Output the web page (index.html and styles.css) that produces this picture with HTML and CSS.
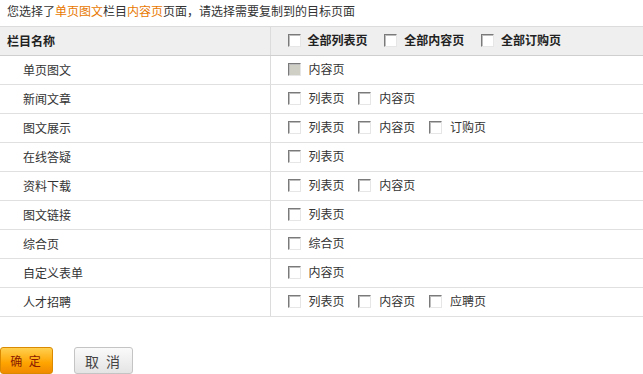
FILE: index.html
```html
<!DOCTYPE html>
<html>
<head>
    <title>复制页面</title>
    <link rel="stylesheet" href="styles.css">
</head>
<body>
    <p class="tip">您选择了<span class="hl">单页图文</span>栏目<span class="hl">内容页</span>页面，请选择需要复制到的目标页面</p>
    <table class="lista">
        <tr class="cabecera">
            <th class="col-nombre">栏目名称</th>
            <th>
                <label class="op"><input type="checkbox">全部列表页</label>
                <label class="op"><input type="checkbox">全部内容页</label>
                <label class="op"><input type="checkbox">全部订购页</label>
            </th>
        </tr>
        <tr>
            <td class="col-nombre">单页图文</td>
            <td><label class="op"><input type="checkbox" disabled>内容页</label></td>
        </tr>
        <tr>
            <td class="col-nombre">新闻文章</td>
            <td>
                <label class="op"><input type="checkbox">列表页</label>
                <label class="op"><input type="checkbox">内容页</label>
            </td>
        </tr>
        <tr>
            <td class="col-nombre">图文展示</td>
            <td>
                <label class="op"><input type="checkbox">列表页</label>
                <label class="op"><input type="checkbox">内容页</label>
                <label class="op"><input type="checkbox">订购页</label>
            </td>
        </tr>
        <tr>
            <td class="col-nombre">在线答疑</td>
            <td><label class="op"><input type="checkbox">列表页</label></td>
        </tr>
        <tr>
            <td class="col-nombre">资料下载</td>
            <td>
                <label class="op"><input type="checkbox">列表页</label>
                <label class="op"><input type="checkbox">内容页</label>
            </td>
        </tr>
        <tr>
            <td class="col-nombre">图文链接</td>
            <td><label class="op"><input type="checkbox">列表页</label></td>
        </tr>
        <tr>
            <td class="col-nombre">综合页</td>
            <td><label class="op"><input type="checkbox">综合页</label></td>
        </tr>
        <tr>
            <td class="col-nombre">自定义表单</td>
            <td><label class="op"><input type="checkbox">内容页</label></td>
        </tr>
        <tr>
            <td class="col-nombre">人才招聘</td>
            <td>
                <label class="op"><input type="checkbox">列表页</label>
                <label class="op"><input type="checkbox">内容页</label>
                <label class="op"><input type="checkbox">应聘页</label>
            </td>
        </tr>
    </table>
    <div class="botones">
        <button class="btn-ok">确 定</button>
        <button class="btn-cancel">取 消</button>
    </div>
</body>
</html>
```

FILE: styles.css
```css
/* Estilo general */
body {
    margin: 0;
    font-family: "Noto Sans CJK SC", "Liberation Sans", sans-serif;
    font-size: 12px;
    color: #333;
    background-color: #fff;
}
.tip {
    margin: 0;
    padding: 0 7px;
    height: 26px;
    line-height: 22px;
}
.hl {
    color: #e87800;
}
.lista {
    width: 100%;
    border-collapse: collapse;
}
.lista th, .lista td {
    height: 29px;
    padding: 0 0 2px 0;
    box-sizing: border-box;
    text-align: left;
    border-bottom: 1px solid #e0e0e0;
}
.cabecera th {
    background-color: #efefef;
    border-top: 1px solid #dcdcdc;
    border-bottom: 1px solid #cfcfcf;
    font-weight: bold;
    color: #222;
    padding-bottom: 1px;
}
.col-nombre {
    width: 270px;
    border-right: 1px solid #dcdcdc;
    padding-left: 23px !important;
}
.cabecera .col-nombre {
    padding-left: 7px !important;
}
.lista th:last-child, .lista td:last-child {
    padding-left: 17px;
}
.op {
    display: inline-flex;
    align-items: center;
    margin-right: 11px;
}
.cabecera .op {
    margin-right: 14px;
}
.op input {
    appearance: none;
    -webkit-appearance: none;
    width: 13px;
    height: 13px;
    margin: 2px 8px 0 0;
    border: 1px solid;
    border-color: #7a7a7a #e6e6e6 #e6e6e6 #7a7a7a;
    box-shadow: inset 1px 1px 0 #bdbdbd;
    background-color: #fff;
}
.cabecera .op input {
    margin-right: 7px;
}
.op input:disabled {
    background-color: #cfcfc6;
}
.botones {
    padding: 30px 0 0 0;
    display: flex;
    gap: 21px;
}
.botones button {
    font-family: "Noto Sans CJK SC", sans-serif;
    height: 27px;
    border-radius: 3px;
    cursor: pointer;
    padding: 0;
}
.btn-ok {
    width: 53px;
    font-size: 12px;
    letter-spacing: 2px;
    color: #8a1a00;
    border: 1px solid #d98a00;
    background: linear-gradient(#ffd050, #ffa400 60%, #f08a00);
}
.btn-cancel {
    width: 59px;
    font-size: 14px;
    letter-spacing: 2px;
    color: #444;
    border: 1px solid #c4c4c4;
    background: linear-gradient(#fafafa, #e4e4e4);
}
```
